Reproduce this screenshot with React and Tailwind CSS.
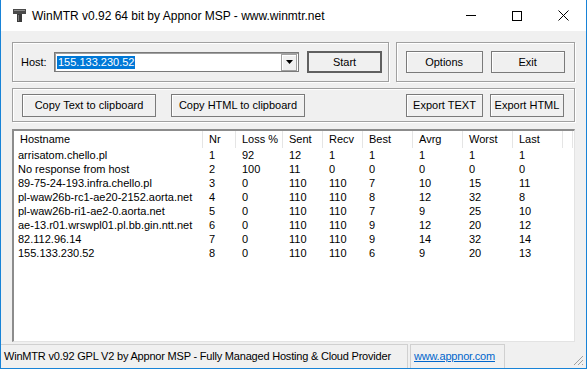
import React from 'react';

const columns = [
  { label: 'Hostname', w: 'w-[189px]' },
  { label: 'Nr', w: 'w-[33px]' },
  { label: 'Loss %', w: 'w-[47px]' },
  { label: 'Sent', w: 'w-[40px]' },
  { label: 'Recv', w: 'w-[40px]' },
  { label: 'Best', w: 'w-[50px]' },
  { label: 'Avrg', w: 'w-[50px]' },
  { label: 'Worst', w: 'w-[50px]' },
  { label: 'Last', w: 'w-[50px]' },
];

const rows = [
  ['arrisatom.chello.pl', '1', '92', '12', '1', '1', '1', '1', '1'],
  ['No response from host', '2', '100', '11', '0', '0', '0', '0', '0'],
  ['89-75-24-193.infra.chello.pl', '3', '0', '110', '110', '7', '10', '15', '11'],
  ['pl-waw26b-rc1-ae20-2152.aorta.net', '4', '0', '110', '110', '8', '12', '32', '8'],
  ['pl-waw26b-ri1-ae2-0.aorta.net', '5', '0', '110', '110', '7', '9', '25', '10'],
  ['ae-13.r01.wrswpl01.pl.bb.gin.ntt.net', '6', '0', '110', '110', '9', '12', '20', '12'],
  ['82.112.96.14', '7', '0', '110', '110', '9', '14', '32', '14'],
  ['155.133.230.52', '8', '0', '110', '110', '6', '9', '20', '13'],
];

const Button = ({ children, className = '', primary = false }) => (
  <div
    className={`flex items-center justify-center bg-[#f0f0f0] text-black ${
      primary
        ? 'border-2 border-[#606060]'
        : 'border border-[#7a7a7a] shadow-[inset_1px_1px_0_#ffffff]'
    } ${className}`}
  >
    {children}
  </div>
);

const Group = ({ children, className = '' }) => (
  <div className={`flex items-center border border-[#a0a0a0] shadow-[inset_1px_1px_0_#ffffff,1px_1px_0_#ffffff] ${className}`}>
    {children}
  </div>
);

const AppIcon = () => (
  <svg width="13" height="13" viewBox="0 0 13 13" className="mr-[6px]">
    <rect x="0" y="0" width="13" height="5" fill="#4a4a4a" />
    <rect x="1" y="1" width="11" height="1" fill="#8a8a8a" />
    <rect x="4" y="5" width="5" height="8" fill="#3a3a3a" />
    <rect x="5" y="6" width="1" height="6" fill="#7a7a7a" />
  </svg>
);

export default function App() {
  return (
    <div className="w-[587px] h-[369px] flex flex-col border-x border-b border-[#1883d7] bg-white overflow-hidden text-[11px] font-['Liberation_Sans',Arial,sans-serif] text-black">
      {/* title bar */}
      <div className="h-[31px] flex items-center bg-white shrink-0">
        <div className="flex items-center pl-[12px] flex-1">
          <AppIcon />
          <span className="text-[12px] text-black">WinMTR v0.92 64 bit by Appnor MSP - www.winmtr.net</span>
        </div>
        <div className="flex h-full">
          <div className="w-[46px] h-full flex items-center justify-center">
            <div className="w-[10px] h-px bg-black" />
          </div>
          <div className="w-[46px] h-full flex items-center justify-center">
            <div className="w-[10px] h-[10px] border border-black" />
          </div>
          <div className="w-[46px] h-full flex items-center justify-center">
            <svg width="11" height="11" viewBox="0 0 11 11">
              <path d="M0.5 0.5 L10.5 10.5 M10.5 0.5 L0.5 10.5" stroke="#000" strokeWidth="1" />
            </svg>
          </div>
        </div>
      </div>

      {/* client area */}
      <div className="flex-1 flex flex-col bg-[#f0f0f0] px-[11px] pt-[11px]">
        <div className="flex gap-[7px] h-[40px] shrink-0">
          <Group className="w-[378px] pl-[8px]">
            <span className="w-[33px]">Host:</span>
            <div className="w-[245px] h-[20px] flex items-center bg-white border border-[#7a7a7a] shadow-[inset_1px_1px_0_#a0a0a0]">
              <div className="flex-1 pl-[2px]">
                <span className="bg-[#0078d7] text-white text-[11px] px-[1px] leading-[13px] inline-block">155.133.230.52</span>
              </div>
              <div className="w-[16px] h-[17px] mr-px flex items-center justify-center bg-[#f0f0f0] border border-[#a0a0a0] shadow-[inset_1px_1px_0_#ffffff]">
                <svg width="7" height="4" viewBox="0 0 7 4">
                  <path d="M0 0 H7 L3.5 4 Z" fill="#000" />
                </svg>
              </div>
            </div>
            <Button primary className="ml-[8px] w-[75px] h-[22px]">Start</Button>
          </Group>
          <Group className="w-[180px] pl-[9px] gap-[8px]">
            <Button className="w-[77px] h-[22px]">Options</Button>
            <Button className="w-[74px] h-[22px]">Exit</Button>
          </Group>
        </div>

        <Group className="mt-[6px] h-[34px] shrink-0 pl-[9px] pr-[10px]">
          <Button className="w-[134px] h-[23px]">Copy Text to clipboard</Button>
          <Button className="ml-[15px] w-[134px] h-[23px]">Copy HTML to clipboard</Button>
          <div className="flex-1" />
          <Button className="w-[77px] h-[23px]">Export TEXT</Button>
          <Button className="ml-[7px] w-[74px] h-[23px]">Export HTML</Button>
        </Group>

        {/* list view */}
        <div className="mt-[7px] h-[213px] shrink-0 bg-white border-t-2 border-l-2 border-t-[#8c8c8c] border-l-[#8c8c8c] border-r border-b border-r-[#e3e3e3] border-b-[#e3e3e3] overflow-hidden">
          <div className="flex h-[17px]">
            {columns.map((c) => (
              <div key={c.label} className={`${c.w} h-full flex items-center pl-[6px] border-r border-[#e5e5e5]`}>
                {c.label}
              </div>
            ))}
            <div className="w-[10px] h-full border-r border-[#e5e5e5]" />
          </div>
          {rows.map((r, i) => (
            <div key={i} className="flex h-[14px] items-center">
              {r.map((v, j) => (
                <div key={j} className={`${columns[j].w} whitespace-nowrap leading-[14px] ${j === 0 ? 'pl-[4px]' : 'pl-[6px]'}`}>
                  {v}
                </div>
              ))}
            </div>
          ))}
        </div>

        {/* status bar */}
        <div className="mt-[2px] -mx-[11px] h-[24px] flex shrink-0 text-[11px] tracking-[-0.2px] whitespace-nowrap">
          <div className="w-[407px] flex items-center pl-[3px] border-t border-r border-[#d0d0d0]">
            WinMTR v0.92 GPL V2 by Appnor MSP - Fully Managed Hosting &amp; Cloud Provider
          </div>
          <div className="ml-[2px] w-[95px] flex items-center pl-[3px] border-t border-x border-[#d0d0d0]">
            <span className="text-[#0066cc] underline">www.appnor.com</span>
          </div>
          <div className="flex-1 flex items-end justify-end pr-[2px] pb-[2px]">
            <svg width="12" height="12" viewBox="0 0 12 12">
              <path d="M11 2 L2 11 M11 6 L6 11 M11 10 L10 11" stroke="#a0a0a0" strokeWidth="1" />
            </svg>
          </div>
        </div>
      </div>
    </div>
  );
}
